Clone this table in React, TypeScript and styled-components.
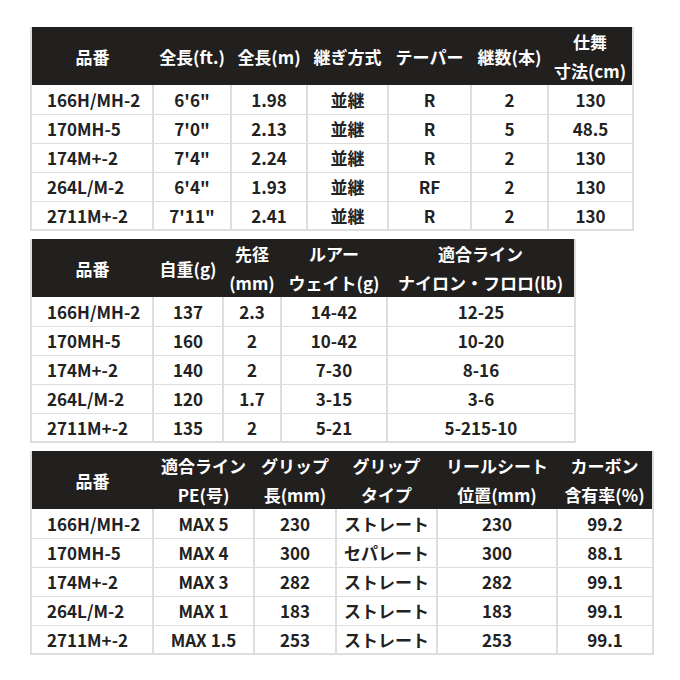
import React from 'react';
import styled, { createGlobalStyle } from 'styled-components';

const GlobalStyle = createGlobalStyle`
  html, body {
    margin: 0;
    padding: 0;
    background: #fff;
  }
  body {
    font-family: "Noto Sans CJK JP", "Noto Sans", sans-serif;
  }
`;

const Page = styled.div`
  display: flex;
  flex-direction: column;
  align-items: flex-start;
  gap: 8px;
  padding: 27px 0 0 30px;
`;

const Table = styled.table<{ $width: number }>`
  width: ${p => p.$width}px;
  border-collapse: collapse;
  table-layout: fixed;
  border: 2px solid #dedede;
  border-top: none;
`;

const Col = styled.col<{ $w: number }>`
  width: ${p => p.$w}px;
`;

const HeadRow = styled.tr`
  background: #221f1f;
  height: 58px;
`;

const HeadCell = styled.th`
  color: #fff;
  font-weight: 700;
  font-size: 17px;
  line-height: 29px;
  text-align: center;
  padding: 0;
  white-space: nowrap;
  vertical-align: middle;
`;

const Row = styled.tr`
  height: 29px;
  border-top: 1px solid #dedede;
  &:first-child {
    border-top: none;
  }
`;

const Cell = styled.td<{ $left?: boolean }>`
  color: #222;
  font-weight: 700;
  font-size: 17px;
  line-height: 27px;
  padding: 0 0 0 ${p => (p.$left ? '15px' : '0')};
  text-align: ${p => (p.$left ? 'left' : 'center')};
  border-left: 2px solid #dedede;
  white-space: nowrap;
  &:first-child {
    border-left: none;
  }
`;

type Spec = {
  width: number;
  cols: number[];
  head: string[][];
  rows: string[][];
};

const models = ['166H/MH-2', '170MH-5', '174M+-2', '264L/M-2', '2711M+-2'];

const specs: Spec[] = [
  {
    width: 602,
    cols: [122, 78, 76, 81, 83, 77, 85],
    head: [['品番'], ['全長(ft.)'], ['全長(m)'], ['継ぎ方式'], ['テーパー'], ['継数(本)'], ['仕舞', '寸法(cm)']],
    rows: [
      ['6\'6"', '1.98', '並継', 'R', '2', '130'],
      ['7\'0"', '2.13', '並継', 'R', '5', '48.5'],
      ['7\'4"', '2.24', '並継', 'R', '2', '130'],
      ['6\'4"', '1.93', '並継', 'RF', '2', '130'],
      ['7\'11"', '2.41', '並継', 'R', '2', '130'],
    ],
  },
  {
    width: 544,
    cols: [122, 70, 58, 106, 188],
    head: [['品番'], ['自重(g)'], ['先径', '(mm)'], ['ルアー', 'ウェイト(g)'], ['適合ライン', 'ナイロン・フロロ(lb)']],
    rows: [
      ['137', '2.3', '14-42', '12-25'],
      ['160', '2', '10-42', '10-20'],
      ['140', '2', '7-30', '8-16'],
      ['120', '1.7', '3-15', '3-6'],
      ['135', '2', '5-21', '5-215-10'],
    ],
  },
  {
    width: 622,
    cols: [122, 101, 82, 101, 120, 96],
    head: [['品番'], ['適合ライン', 'PE(号)'], ['グリップ', '長(mm)'], ['グリップ', 'タイプ'], ['リールシート', '位置(mm)'], ['カーボン', '含有率(%)']],
    rows: [
      ['MAX 5', '230', 'ストレート', '230', '99.2'],
      ['MAX 4', '300', 'セパレート', '300', '88.1'],
      ['MAX 3', '282', 'ストレート', '282', '99.1'],
      ['MAX 1', '183', 'ストレート', '183', '99.1'],
      ['MAX 1.5', '253', 'ストレート', '253', '99.1'],
    ],
  },
];

const SpecTable = ({ spec }: { spec: Spec }) => (
  <Table $width={spec.width}>
    <colgroup>
      {spec.cols.map((w, i) => (
        <Col key={i} $w={w} />
      ))}
    </colgroup>
    <thead>
      <HeadRow>
        {spec.head.map((lines, i) => (
          <HeadCell key={i}>
            {lines.map((l, j) => (
              <div key={j}>{l}</div>
            ))}
          </HeadCell>
        ))}
      </HeadRow>
    </thead>
    <tbody>
      {spec.rows.map((r, i) => (
        <Row key={i}>
          <Cell $left>{models[i]}</Cell>
          {r.map((v, j) => (
            <Cell key={j}>{v}</Cell>
          ))}
        </Row>
      ))}
    </tbody>
  </Table>
);

export default function App() {
  return (
    <>
      <GlobalStyle />
      <Page>
        {specs.map((s, i) => (
          <SpecTable key={i} spec={s} />
        ))}
      </Page>
    </>
  );
}
